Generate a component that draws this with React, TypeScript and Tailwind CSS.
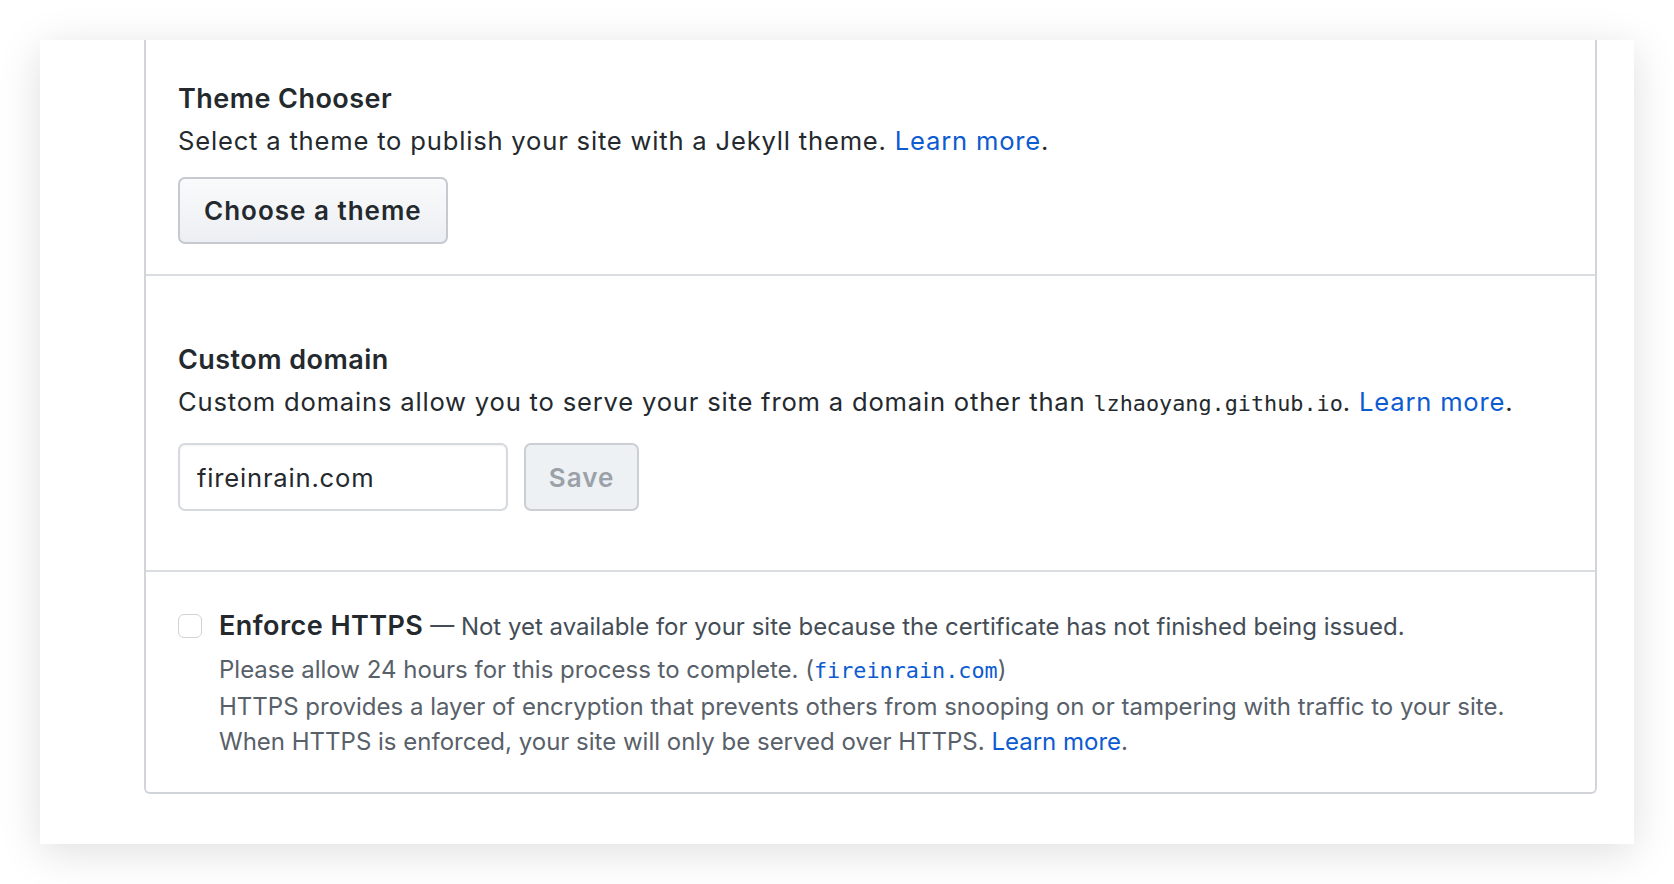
import React from "react";

const sans = { fontFamily: "Inter, 'Noto Sans', sans-serif" };

function Link({ children }: { children: React.ReactNode }) {
  return <a className="text-[#0d5bd1] no-underline">{children}</a>;
}

export default function App() {
  return (
    <div className="h-[884px] w-[1674px] bg-white p-[40px] text-[#24292e]" style={sans}>
      <div className="flex h-full flex-col overflow-hidden bg-white pl-[104px] pr-[37px] pb-[51px] shadow-[0_8px_40px_rgba(0,0,0,0.13)]">
        <div className="flex flex-1 flex-col rounded-b-[6px] border-x-2 border-b-2 border-[#d1d5da]">
          {/* theme chooser */}
          <section className="border-b-2 border-[#d9dce0] pl-[32px] pt-[41px] pb-[30px]">
            <h3 className="text-[27px] leading-[36px] font-semibold tracking-[0.45px]">Theme Chooser</h3>
            <p className="mt-[6px] text-[25.6px] leading-[36px] tracking-[0.8px]">
              Select a theme to publish your site with a Jekyll theme. <Link>Learn more</Link>.
            </p>
            <button className="mt-[18px] h-[67px] rounded-[7px] border-2 border-[#c6cad0] bg-gradient-to-b from-[#f9fafb] to-[#eceff3] px-[24px] text-[26px] font-semibold tracking-[1px] text-[#24292e]">
              Choose a theme
            </button>
          </section>

          {/* custom domain */}
          <section className="border-b-2 border-[#d9dce0] pl-[32px] pt-[66px] pb-[59px]">
            <h3 className="text-[27px] leading-[36px] font-semibold tracking-[0.45px]">Custom domain</h3>
            <p className="mt-[6px] text-[25.6px] leading-[36px] tracking-[0.8px]">
              Custom domains allow you to serve your site from a domain other than{" "}
              <code className="font-['DejaVu_Sans_Mono',monospace] text-[21.8px] tracking-normal">lzhaoyang.github.io</code>.{" "}
              <Link>Learn more</Link>.
            </p>
            <div className="mt-[21px] flex gap-[16px]">
              <input
                readOnly
                value="fireinrain.com"
                className="h-[68px] w-[330px] rounded-[7px] border-2 border-[#d6d9dd] bg-white px-[17px] text-[25.6px] tracking-[0.8px] text-[#24292e] shadow-[inset_0_1px_2px_rgba(27,31,35,0.06)] outline-none"
              />
              <button className="h-[68px] w-[115px] rounded-[7px] border-2 border-[#cbced3] bg-[#eef1f4] text-[26px] font-semibold tracking-[1px] text-[#9aa1a8]">
                Save
              </button>
            </div>
          </section>

          {/* https */}
          <section className="flex flex-1 gap-[17px] pl-[32px] pt-[36px] pb-[32px]">
            <div className="mt-[6px] h-[24px] w-[24px] shrink-0 rounded-[6px] border-[1.5px] border-[#cfd2d6] bg-white" />
            <div>
              <p className="text-[27px] leading-[36px]">
                <span className="font-semibold tracking-[0.45px]">Enforce HTTPS</span>
                <span className="text-[24px] text-[#444d56]">
                  {" "}— Not yet available for your site because the certificate has not finished being issued.
                </span>
              </p>
              <div className="mt-[7px] text-[24px] leading-[35.7px] text-[#586069]">
                <p>
                  Please allow 24 hours for this process to complete. (
                  <code className="font-['DejaVu_Sans_Mono',monospace] text-[21.8px] text-[#0d5bd1]">fireinrain.com</code>)
                </p>
                <p>HTTPS provides a layer of encryption that prevents others from snooping on or tampering with traffic to your site.</p>
                <p>
                  When HTTPS is enforced, your site will only be served over HTTPS. <Link>Learn more</Link>.
                </p>
              </div>
            </div>
          </section>
        </div>
      </div>
    </div>
  );
}
